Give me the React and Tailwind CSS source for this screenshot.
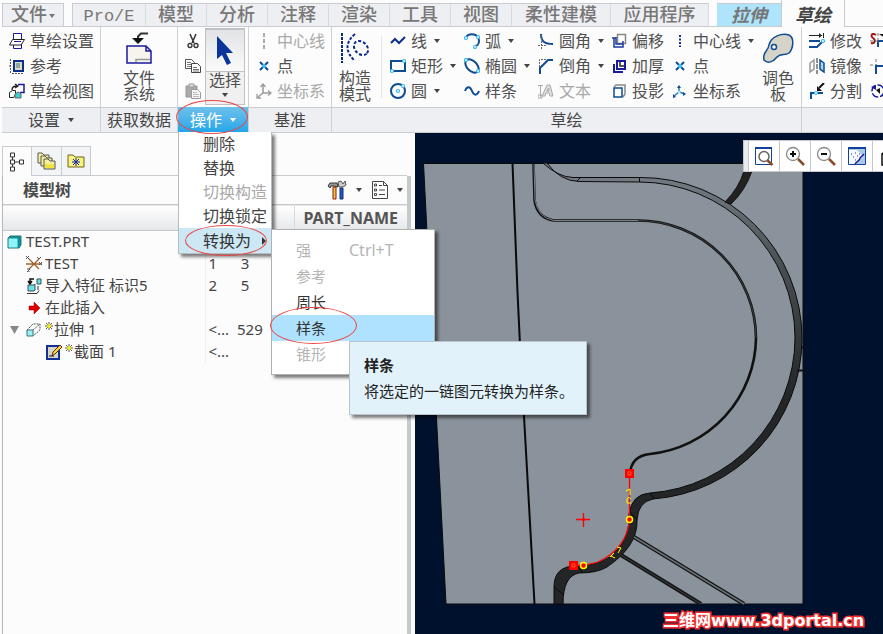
import React, { useState } from 'react';
import clsx from 'clsx';

const NAVY = '#0b2f8a';
const BLUE = '#0f4c92';
const CYAN = '#35b8ee';

const Icon = ({ children, className = 'w-4 h-4', viewBox = '0 0 16 16' }) => (
  <svg viewBox={viewBox} className={clsx('shrink-0', className)} fill="none" aria-hidden="true">
    {children}
  </svg>
);

const Caret = ({ className = 'text-[#444]' }) => (
  <svg viewBox="0 0 6 4" className={clsx('w-[6px] h-1 shrink-0', className)} aria-hidden="true">
    <path d="M0 0h6L3 4z" fill="currentColor" />
  </svg>
);

const Dot = ({ x, y, r = 1.5 }) => (
  <circle cx={x} cy={y} r={r} fill="#fff" stroke={CYAN} strokeWidth="1.2" />
);

const icons = {
  setup: (
    <>
      <path d="M4.500 .5h8v15h-8z" fill="#fff" stroke="#1a1a9c" />
      <path d="M3.500 6.500h12l-3.500 5.500H.5z" fill="#fff" stroke="#222" />
      <path d="M5 8.500h7" stroke="#1a1a9c" />
    </>
  ),
  reference: (
    <>
      <path d="M5 3h9v10H5z" fill="#dcdcc4" stroke={NAVY} strokeWidth="2" />
      <path d="M7 5h4v5H7z" fill="#8fa8a0" />
      <path d="M1.500 1v14M0 8h3M3 15.500h12" stroke="#555" strokeDasharray="2 1" />
    </>
  ),
  sketchView: (
    <>
      <path d="M9 1.500h6v8h-4" stroke="#1a1a9c" strokeWidth="1.500" />
      <path d="M3 7c0-3 2-4 5-4M6 1l3 2-3 2" stroke="#222" strokeWidth="1.300" />
      <path d="M.5 9.500l3-2h3v4l-2 3h-4z" fill="#fff" stroke="#222" />
      <path d="M6 11l3-2 3 2v4H6z" fill="#39d0cf" stroke="#666" />
    </>
  ),
  cut: (
    <>
      <path d="M5 1l4 9M11 1L7 10" stroke="#333" strokeWidth="1.500" />
      <circle cx="5" cy="12.500" r="2" stroke="#333" strokeWidth="1.300" />
      <circle cx="11" cy="12.500" r="2" stroke="#333" strokeWidth="1.300" />
    </>
  ),
  copy: (
    <>
      <path d="M.5 1.500h6l3 3v6h-9z" fill="#fff" stroke="#555" />
      <path d="M2 4.500h4M2 6.500h5M2 8.500h4" stroke="#777" />
      <path d="M6.500 5.500h6l3 3v6h-9z" fill="#fff" stroke="#444" />
      <path d="M8 9.500h4M8 11.500h6M8 13h6" stroke="#777" />
    </>
  ),
  paste: (
    <>
      <path d="M1 3h11v11H1z" fill="#aaa" stroke="#999" />
      <path d="M4 1h5v3H4z" fill="#ddd" stroke="#999" />
      <path d="M6.500 6.500h6l3 3v6h-9z" fill="#f5f5f5" stroke="#999" />
      <path d="M8 9.500h4M8 11.500h6M8 13.500h6" stroke="#bbb" />
    </>
  ),
  centerlineOff: <path d="M8 0v16" stroke="#aaa" strokeWidth="2" strokeDasharray="4 2" />,
  centerline: <path d="M8 2v12" stroke={NAVY} strokeWidth="2" strokeDasharray="2 1.500" />,
  point: (
    <>
      <path d="M4 4l8 8M12 4l-8 8" stroke={BLUE} strokeWidth="2" />
      <circle cx="8" cy="8" r="2" fill="#48c5f5" />
    </>
  ),
  csysOff: (
    <>
      <path d="M7 2v8l7 0M7 10l-5 4" stroke="#999" strokeWidth="1.500" />
      <path d="M4.500 4L7 1l2.500 3M12 7.500L15 10l-3 2.500M1 11v4h4" stroke="#999" strokeWidth="1.300" />
    </>
  ),
  csys: (
    <>
      <path d="M7 3v6l6 2M7 9l-5 4" stroke="#2878b8" strokeWidth="1.500" />
      <path d="M5 5l2-3 2 3zM11 9l3 2-3 2zM1 11v4l3-1z" fill={BLUE} />
      <circle cx="7" cy="9" r="1.500" fill="#9ce4fb" />
    </>
  ),
  line: <path d="M1 10l4-4 4 4 6-6" stroke={NAVY} strokeWidth="2" />,
  rect: (
    <>
      <path d="M1 3h14v10H1z" stroke={BLUE} strokeWidth="2" />
      <Dot x={14} y={3} />
      <Dot x={2} y={13} />
    </>
  ),
  circle: (
    <>
      <circle cx="8" cy="8" r="7" stroke={BLUE} strokeWidth="2" />
      <Dot x={8} y={8} />
      <Dot x={13} y={3} />
    </>
  ),
  arc: (
    <>
      <path d="M2 4C6-1 15 1 15 8c0 3-2 5-4 5" stroke={BLUE} strokeWidth="2" />
      <Dot x={2} y={5} />
      <Dot x={11} y={14} />
      <Dot x={14} y={4} />
    </>
  ),
  ellipse: (
    <>
      <ellipse cx="8" cy="8" rx="8" ry="5" transform="rotate(45 8 8)" stroke={BLUE} strokeWidth="2" />
      <Dot x={2} y={2} />
      <Dot x={14} y={13} />
    </>
  ),
  spline: <path d="M1 8c2-5 5-5 7 0s5 5 7 0" stroke={BLUE} strokeWidth="2" />,
  fillet: (
    <>
      <path d="M3 1c0 8 4 10 12 10" stroke={BLUE} strokeWidth="2" />
      <path d="M3.500 2v14M0 12.500h8" stroke="#666" strokeDasharray="2 1" />
    </>
  ),
  chamfer: (
    <>
      <path d="M15 2h-5L2 10v6" stroke={BLUE} strokeWidth="2" />
      <path d="M1.500 9V1.500H9" stroke="#666" strokeDasharray="2 1" />
    </>
  ),
  text: (
    <>
      <path d="M2.500 2v12M0 2.500h5M0 12h4v3H0z" stroke="#aaa" />
      <path d="M4 13L9 2h3l3 11h-3l-1-3H8l-1 3zM9 8h2l-.5-3z" fill="#ddd" stroke="#aaa" />
    </>
  ),
  offset: (
    <>
      <path d="M6.500 1.500h8v9h-8z" stroke="#888" strokeWidth="1.500" />
      <path d="M3 5v9h9V8M5 5H1M5 4v7h7" stroke="#1a3aa0" strokeWidth="1.500" />
    </>
  ),
  thicken: (
    <>
      <path d="M6 3h8v8H6zM3 6v8h9" stroke="#1a1a9c" strokeWidth="2" />
      <path d="M9 4v4h4" stroke="#222" strokeWidth="1.500" />
    </>
  ),
  project: (
    <>
      <path d="M3 4l2-2h9v9l-2 3" stroke="#888" strokeWidth="1.500" />
      <path d="M3 5h8v9H3z" fill="#fff" stroke={BLUE} strokeWidth="1.500" />
    </>
  ),
  modify: (
    <>
      <path d="M0 2.500h13M14.500 0v5" stroke="#222" />
      <path d="M10 0l3 2.500L10 5z" fill="#222" />
      <path d="M0 8h11" stroke={BLUE} strokeWidth="2" />
      <path d="M0 14h8l5-5" stroke={BLUE} strokeWidth="2" />
      <Dot x={14} y={8} />
    </>
  ),
  mirror: (
    <>
      <path d="M1 5l4-3v9l-4 3z" stroke="#999" strokeWidth="1.500" />
      <path d="M8 0v16" stroke="#222" strokeDasharray="5 1" />
      <path d="M11 2l4 3v9l-4-3z" fill="#a5d8ee" stroke={BLUE} strokeWidth="1.500" />
    </>
  ),
  divide: (
    <>
      <path d="M2 16v-6h12" stroke={BLUE} strokeWidth="2" />
      <path d="M15 0l-5 5" stroke="#111" strokeWidth="2" />
      <path d="M8 3v5h5z" fill="#111" />
      <Dot x={7} y={10} />
    </>
  ),
  trim: (
    <>
      <path d="M6 2C2-1 0 3 3 5s2 6-2 5" stroke="#a01c10" strokeWidth="2" />
      <path d="M8 14V8h8" stroke={BLUE} strokeWidth="2" />
      <path d="M8 0v8M0 8h8" stroke="#777" strokeDasharray="3 2" />
      <path d="M9 1l6 0v4z" fill="#111" />
    </>
  ),
  corner: (
    <>
      <path d="M6 1v14M0 7h7" stroke="#777" strokeDasharray="3 2" />
      <path d="M6 16V8h10" stroke={BLUE} strokeWidth="2" />
    </>
  ),
  rotate: (
    <>
      <circle cx="8" cy="8" r="6" stroke="#1a1a9c" strokeWidth="1.500" strokeDasharray="7 2" />
      <path d="M1 4l5-2v5z" fill="#1a1a9c" />
      <path d="M6 7l4-2v6z" fill="#111" />
    </>
  ),
};

const Tool = ({ icon, label, caret, disabled }) => (
  <button
    type="button"
    disabled={disabled}
    className={clsx('flex items-center h-[25px] gap-[5px] whitespace-nowrap', disabled ? 'text-[#a9a9a9]' : 'text-[#505050]')}
  >
    <Icon>{icons[icon]}</Icon>
    {label && <span>{label}</span>}
    {caret && <Caret className="ml-[2px] text-[#444]" />}
  </button>
);

const ToolColumn = ({ tools, className }) => (
  <div className={clsx('flex flex-col shrink-0 items-start', className)}>
    {tools.map((tool) => (
      <Tool key={tool.icon} {...tool} />
    ))}
  </div>
);

// Large button, the label wraps after two characters
const BigTool = ({ label, className, children }) => (
  <button type="button" className={clsx('flex flex-col items-center shrink-0 pt-1 leading-4 text-[#505050]', className)}>
    {children}
    <span className="w-8 mt-[6px] text-center">{label}</span>
  </button>
);

const Group = ({ label, caret, className, children, footer }) => (
  <section className={clsx('flex flex-col shrink-0 border-r border-[#cdd1d5]', className)}>
    <div className="flex items-start h-20 pt-px">{children}</div>
    {footer || (
      <div className="flex items-center justify-center gap-2 h-[26px] border-y border-[#c8ccd0] bg-[#eeeff2] text-[#444]">
        {label}
        {caret && <Caret />}
      </div>
    )}
  </section>
);

const Ring = ({ className }) => (
  <span className={clsx('absolute z-30 rounded-[50%] border border-[#ee4444] pointer-events-none', className)} />
);

const tabs = [
  { label: 'Pro/E', width: 'w-[73px] text-[17px]' },
  { label: '模型', width: 'w-[61px]' },
  { label: '分析', width: 'w-[61px]' },
  { label: '注释', width: 'w-[61px]' },
  { label: '渲染', width: 'w-[61px]' },
  { label: '工具', width: 'w-[61px]' },
  { label: '视图', width: 'w-[61px]' },
  { label: '柔性建模', width: 'w-[99px]' },
  { label: '应用程序', width: 'w-[98px]' },
];

const TabBar = ({ active, onSelect }) => (
  <nav className="flex items-end h-[27px] pl-[2px] font-['Liberation_Mono','Noto_Sans_CJK_SC',monospace] text-lg leading-none font-medium text-[#777]">
    <button type="button" className="flex items-center justify-center gap-[2px] w-[62px] h-6 pt-[2px] shrink-0 border border-[#c8ccd0] bg-[#eeeff2]">
      文件
      <Caret className="text-[#777]" />
    </button>
    <span className="w-2 h-px shrink-0 bg-[#c8ccd0]" />
    <div className="flex shrink-0 border-l border-[#c8ccd0]">
      {tabs.map((tab) => (
        <button
          key={tab.label}
          type="button"
          onClick={() => onSelect(tab.label)}
          className={clsx('h-6 pt-[2px] shrink-0 border-y border-r border-y-[#c8ccd0] border-r-[#d8dbde] bg-[#eeeff2]', tab.width)}
        >
          {tab.label}
        </button>
      ))}
    </div>
    <span className="w-2 h-px shrink-0 bg-[#c8ccd0]" />
    <button
      type="button"
      onClick={() => onSelect('拉伸')}
      className="w-16 h-6 pt-1 shrink-0 italic font-bold border-y border-[#c8ccd0] bg-[#aee4fc]"
    >
      拉伸
    </button>
    <button
      type="button"
      onClick={() => onSelect('草绘')}
      className={clsx('w-16 h-[27px] pt-[6px] shrink-0 italic font-bold border-x border-[#c8ccd0] bg-[#fcfcfc]', active === '草绘' && 'text-[#444]')}
    >
      草绘
    </button>
    <span className="flex-1 h-px bg-[#c8ccd0]" />
  </nav>
);

const Tooltip = () => (
  <div role="tooltip" className="absolute z-20 left-[77px] top-[26px] w-[238px] h-[74px] px-[14px] pt-3 border border-[#b9c4cb] bg-[#e1f2fb] text-[15px] leading-[22px] text-[#222] whitespace-nowrap shadow-[3px_3px_3px_rgba(0,0,0,0.5)]">
    <div className="font-bold">样条</div>
    <div className="pt-1">将选定的一链图元转换为样条。</div>
  </div>
);

const convertItems = [
  { label: '强', shortcut: 'Ctrl+T', disabled: true },
  { label: '参考', disabled: true },
  { label: '周长' },
  { label: '样条', active: true },
  { label: '锥形', disabled: true },
];

const ConvertMenu = () => (
  <ul role="menu" className="absolute z-10 left-[92px] top-px w-[164px] py-[7px] border border-[#b0b0b0] bg-white text-[15px] shadow-[3px_3px_3px_rgba(0,0,0,0.5)]">
    {convertItems.map((item) => (
      <li key={item.label} className={clsx('relative h-[26px] flex items-center', item.active && 'bg-[#afe2fe]')}>
        <button
          type="button"
          role="menuitem"
          disabled={item.disabled}
          className={clsx('flex items-center w-full pl-6 text-left', item.disabled ? 'text-[#b5b5b5]' : 'text-[#333]')}
        >
          <span className="w-[53px]">{item.label}</span>
          {item.shortcut && <span className="text-base">{item.shortcut}</span>}
        </button>
        {item.active && <Ring className="-left-[2px] -top-2 w-[87px] h-[37px]" />}
        {item.active && <Tooltip />}
      </li>
    ))}
  </ul>
);

const operations = [
  { label: '删除' },
  { label: '替换' },
  { label: '切换构造', disabled: true },
  { label: '切换锁定' },
];

const OperationsMenu = () => (
  <ul role="menu" className="absolute z-20 left-0 top-[25px] w-[94px] border border-t-0 border-[#b8bcc0] bg-white text-base shadow-[3px_3px_3px_rgba(0,0,0,0.5)]">
    {operations.map((item) => (
      <li key={item.label} className="h-6">
        <button
          type="button"
          role="menuitem"
          disabled={item.disabled}
          className={clsx('w-full h-6 pl-6 leading-6 text-left whitespace-nowrap', item.disabled ? 'text-[#a9a9a9]' : 'text-[#444]')}
        >
          {item.label}
        </button>
      </li>
    ))}
    <li className="relative h-[25px] bg-[#cde8f5]">
      <button type="button" role="menuitem" className="flex items-center justify-between w-full h-[25px] pl-6 pr-[5px] text-[#333]">
        转换为
        <svg viewBox="0 0 4 8" className="w-1 h-2" aria-hidden="true">
          <path d="M0 0l4 4-4 4z" fill="#333" />
        </svg>
      </button>
      <Ring className="left-[6px] -top-[3px] w-[82px] h-[31px]" />
      <ConvertMenu />
    </li>
  </ul>
);

const Ribbon = () => (
  <div className="flex pl-[2px] text-base leading-none">
    <Group label="设置" caret className="w-[99px]">
      <ToolColumn
        className="pl-[7px]"
        tools={[
          { icon: 'setup', label: '草绘设置' },
          { icon: 'reference', label: '参考' },
          { icon: 'sketchView', label: '草绘视图' },
        ]}
      />
    </Group>

    <Group label="获取数据" className="w-[77px]">
      <BigTool label="文件系统" className="w-full">
        <Icon viewBox="0 0 26 32" className="w-[26px] h-8">
          <path d="M22 1.500h-7l-3 3v3" stroke="#333" strokeWidth="2" />
          <path d="M6 6h12l-6 6z" fill="#111" />
          <path d="M1 14h19l5 5v12H1z" fill="#f7f4ee" stroke="#1a1a9c" strokeWidth="1.500" />
          <path d="M20 14v5h5" stroke="#1a1a9c" strokeWidth="1.500" />
          <path d="M10 30v-2.500h14" stroke="#999" strokeWidth="1.500" />
        </Icon>
      </BigTool>
    </Group>

    <Group
      className="w-[71px]"
      footer={
        <div className="relative h-[26px]">
          <button
            type="button"
            aria-haspopup="menu"
            aria-expanded="true"
            className="flex items-center justify-center gap-2 w-full h-[26px] bg-linear-to-b from-[#6cc0ea] to-[#16a6ea] text-white"
          >
            操作
            <Caret className="text-white" />
          </button>
          <Ring className="-left-[2px] -top-[7px] w-[72px] h-[34px]" />
          <OperationsMenu />
        </div>
      }
    >
      <ToolColumn className="w-[27px] pl-[7px]" tools={[{ icon: 'cut' }, { icon: 'copy' }, { icon: 'paste' }]} />
      <button type="button" className="flex flex-col items-center w-10 h-[77px] border border-t-2 border-[#bfc1c4] bg-[#f0f0f1] text-[#505050]">
        <span className="flex items-center justify-center w-full h-[42px] shrink-0 border-b border-[#bfc1c4] bg-linear-to-b from-[#e2e3e6] to-[#fafafa]">
          <Icon viewBox="0 0 16 30" className="w-4 h-[30px]">
            <path d="M0 0v23l5-4 5 10 4-2-5-10h7z" fill="#0a339c" />
          </Icon>
        </span>
        <span>选择</span>
        <Caret className="mt-[5px] text-[#444]" />
      </button>
    </Group>

    <Group label="基准" className="w-[83px]">
      <ToolColumn
        className="pl-[7px]"
        tools={[
          { icon: 'centerlineOff', label: '中心线', disabled: true },
          { icon: 'point', label: '点' },
          { icon: 'csysOff', label: '坐标系', disabled: true },
        ]}
      />
    </Group>

    <Group label="草绘" className="w-[470px]">
      <BigTool label="构造模式" className="w-[46px]">
        <Icon viewBox="0 0 30 32" className="w-[30px] h-8">
          <path d="M2 1v30" stroke="#0a2a8a" strokeWidth="2" strokeDasharray="3 1" />
          <path d="M15 2Q0 15 15 29" stroke="#0a2a8a" strokeWidth="2" strokeDasharray="3 1.500" />
          <ellipse cx="21" cy="16" rx="8" ry="6" transform="rotate(45 21 16)" stroke="#0a2a8a" strokeWidth="2" strokeDasharray="3 2" />
        </Icon>
      </BigTool>
      <span className="w-px h-[62px] mt-2 mr-2 shrink-0 ml-[3px] bg-[#e4e6e8]" />
      <ToolColumn
        className="w-[74px]"
        tools={[
          { icon: 'line', label: '线', caret: true },
          { icon: 'rect', label: '矩形', caret: true },
          { icon: 'circle', label: '圆', caret: true },
        ]}
      />
      <ToolColumn
        className="w-[74px]"
        tools={[
          { icon: 'arc', label: '弧', caret: true },
          { icon: 'ellipse', label: '椭圆', caret: true },
          { icon: 'spline', label: '样条' },
        ]}
      />
      <ToolColumn
        className="w-[73px]"
        tools={[
          { icon: 'fillet', label: '圆角', caret: true },
          { icon: 'chamfer', label: '倒角', caret: true },
          { icon: 'text', label: '文本', disabled: true },
        ]}
      />
      <ToolColumn
        className="w-[61px]"
        tools={[
          { icon: 'offset', label: '偏移' },
          { icon: 'thicken', label: '加厚' },
          { icon: 'project', label: '投影' },
        ]}
      />
      <ToolColumn
        className="w-[83px]"
        tools={[
          { icon: 'centerline', label: '中心线', caret: true },
          { icon: 'point', label: '点' },
          { icon: 'csys', label: '坐标系' },
        ]}
      />
      <BigTool label="调色板" className="w-[46px]">
        <Icon viewBox="0 0 32 32" className="w-8 h-8">
          <path d="M2 28C0 20 6 20 7 13 9 4 20 1 27 3c6 3 4 14 0 18-4 3-8 0-12 4-4 5-9 7-13 3z" fill="#d6d4c8" stroke={BLUE} strokeWidth="1.500" />
          <circle cx="12" cy="15" r="2.500" fill="#fff" stroke={BLUE} strokeWidth="1.500" />
        </Icon>
      </BigTool>
    </Group>

    <section className="flex flex-col flex-1 min-w-0 overflow-hidden">
      <div className="flex h-20 pt-px pl-[7px]">
        <ToolColumn
          className="w-[61px]"
          tools={[
            { icon: 'modify', label: '修改' },
            { icon: 'mirror', label: '镜像' },
            { icon: 'divide', label: '分割' },
          ]}
        />
        <ToolColumn tools={[{ icon: 'trim' }, { icon: 'corner' }, { icon: 'rotate' }]} />
      </div>
      <div className="h-[26px] border-y border-[#c8ccd0] bg-[#eeeff2]" />
    </section>
  </div>
);

const Star = () => (
  <Icon viewBox="0 0 8 8" className="w-2 h-2 mx-px -mt-2">
    <path d="M4 0v8M0 4h8M1 1l6 6M7 1L1 7" stroke="#555" strokeWidth="1" />
    <circle cx="4" cy="4" r="2" fill="#f6ee10" />
  </Icon>
);

const treeIcons = {
  part: (
    <>
      <path d="M2 4l2-2h11v9l-2 3H2z" fill="#0f8f98" stroke="#277" />
      <path d="M2.500 4.500h9v9h-9z" fill="#8ff4f6" />
    </>
  ),
  csys: (
    <>
      <path d="M0 8h16M3 3l10 10M13 3L3 13" stroke="#a5622f" strokeWidth="1.300" />
      <path d="M0 0l3 3M3 0L0 3M13 6l3 3M16 6l-3 3M11 1l2 2 2-2M1 13h3l-3 3h3" stroke="#555" />
    </>
  ),
  imported: (
    <>
      <path d="M1 15.500h10l2-3" stroke="#333" />
      <path d="M2 7h6l1-1v6l-1 1H2zM11 1h4v5h-4z" fill="#6fe0e6" stroke="#355" />
      <path d="M8 1H4v4M2 3l2 3 2-3" stroke="#111" strokeWidth="1.500" />
      <path d="M12 8v4" stroke="#333" />
    </>
  ),
  insert: <path d="M3 6h5V2l6 6-6 6v-4H3z" fill="#e00000" stroke="#900" strokeWidth=".5" />,
  extrude: (
    <>
      <path d="M1 8h6v6H1z" fill="#9ff0f4" stroke="#377" />
      <path d="M1 8l6-6h7v6l-7 6M7 8l7-6" stroke="#555" strokeDasharray="2 1" />
    </>
  ),
  section: (
    <>
      <path d="M1 2h12v13H1z" fill="#d8d5c4" stroke="#12309a" strokeWidth="2" />
      <path d="M6 12l1-4 7-7 2 2-7 7z" fill="#f5d838" stroke="#5a2a10" />
      <path d="M3 12h5" stroke="#222" />
    </>
  ),
};

const treeRows = [
  { icon: 'part', label: 'TEST.PRT', indent: 'pl-[3px]', gap: 'mr-1' },
  { icon: 'csys', label: 'TEST', indent: 'pl-[23px]', gap: 'mr-[3px]', no: '1', id: '3' },
  { icon: 'imported', label: '导入特征 标识5', indent: 'pl-[23px]', gap: 'mr-[3px]', no: '2', id: '5' },
  { icon: 'insert', label: '在此插入', indent: 'pl-[23px]', gap: 'mr-[3px]' },
  { icon: 'extrude', label: '拉伸 1', indent: 'pl-[7px]', gap: 'mr-[2px]', open: true, star: true, no: '<...', id: '529' },
  { icon: 'section', label: '截面 1', indent: 'pl-[43px]', gap: 'mr-[2px]', star: true, no: '<...' },
];

const ModelTree = () => (
  <table className="w-full table-fixed border-collapse text-[15px] leading-none text-[#444]">
    <thead>
      <tr className="h-[26px] border-y border-[#c5c8cb] bg-linear-to-b from-white to-[#e6e7e9]">
        <th className="w-[202px]" aria-label="模型树" />
        <th className="w-[30px]" />
        <th className="w-[59px]" />
        <th className="border-l border-[#d8dadd] p-0 text-base leading-none font-bold text-[#555] text-center">PART_NAME</th>
      </tr>
    </thead>
    <tbody>
      {treeRows.map((row) => (
        <tr key={row.label} className="h-[22px]">
          <td className="p-0 border-r border-[#efefef]">
            <div className={clsx('flex items-center whitespace-nowrap', row.indent)}>
              {row.open && (
                <Icon viewBox="0 0 9 8" className="w-[9px] h-2 mr-[7px]">
                  <path d="M0 0h9L4.500 8z" fill="#888" />
                </Icon>
              )}
              <Icon className={clsx('w-4 h-4', row.gap)}>{treeIcons[row.icon]}</Icon>
              {row.star && <Star />}
              {row.label}
            </div>
          </td>
          <td className="p-0 pl-[3px]">{row.no}</td>
          <td className="p-0 pl-[2px]">
            <span className="block min-w-4 w-min text-center">{row.id}</span>
          </td>
          <td />
        </tr>
      ))}
    </tbody>
  </table>
);

const TreePanel = () => (
  <aside className="flex flex-col w-[415px] shrink-0 pl-[2px] pr-1 pt-[13px]">
    <div className="flex h-[30px]">
      <button type="button" aria-label="模型树" className="flex items-center justify-center w-[30px] border border-b-0 border-[#c8ccd0]">
        <Icon viewBox="0 0 14 20" className="w-[14px] h-5">
          <path d="M.5 1h4v4h-4zM.5 8h4v4h-4zM.5 15h4v4h-4zM9.500 8h4v4h-4zM2.500 5v3M2.500 12v3M4.500 10h5" stroke="#333" />
        </Icon>
      </button>
      <button type="button" aria-label="文件夹浏览器" className="flex items-center justify-center w-[30px] border-y border-r border-[#c8ccd0] bg-[#f3f4f5]">
        <Icon viewBox="0 0 20 20" className="w-5 h-5">
          {[0, 3, 6].map((n) => (
            <path key={n} d="M1 2h4l2 2h5v8H1z" transform={`translate(${n} ${n})`} fill="#f8f2a0" stroke="#555" />
          ))}
          <path d="M8 13h9v4H8z" fill="#f2e440" />
        </Icon>
      </button>
      <button type="button" aria-label="收藏夹" className="flex items-center justify-center w-[29px] border-y border-r border-[#c8ccd0] bg-[#f3f4f5]">
        <Icon viewBox="0 0 18 18" className="w-[18px] h-[18px]">
          <path d="M1 15V3h5l2 2h9v10z" fill="#f9f27c" stroke="#6a6420" />
          <path d="M9 6v8M5 10h8M6 7l6 6M12 7l-6 6" stroke="#1020b0" />
        </Icon>
      </button>
      <span className="flex-1 mr-1 border-b border-[#c8ccd0]" />
    </div>
    <div className="flex flex-col flex-1 border-l border-r-4 border-l-[#b5b8bb] border-r-[#c5cacd]">
      <div className="flex items-center h-7 pl-5 pr-1 text-base leading-none font-bold text-[#4a4a4a]">
        <h2 className="flex-1">模型树</h2>
        <button type="button" aria-label="设置" className="flex items-center gap-[9px]">
          <Icon viewBox="0 0 20 20" className="w-5 h-5">
            <path d="M1 6l2-3h7l1 4-4-1H4L3 8z" fill="#999" stroke="#333" />
            <path d="M6 7h3v12H6z" fill="#f0c040" stroke="#8a2010" />
            <path d="M13 8h3v11h-3z" fill="#2458c8" stroke="#112a70" />
            <path d="M11 2l1 5h4l3-2-1-4-2 3-2-3z" fill="#ccc" stroke="#555" />
          </Icon>
          <Caret />
        </button>
        <button type="button" aria-label="显示" className="flex items-center gap-[9px] ml-[10px]">
          <Icon viewBox="0 0 16 20" className="w-4 h-5">
            <path d="M.5 1.500h11l4 4v13H.5z" fill="#fff" stroke="#444" />
            <path d="M11.500 1.500v4h4M7 5.500h3M7 10h6M7 14.500h6" stroke="#444" />
            <path d="M2.500 4h2v2h-2zM2.500 9h2v2h-2zM2.500 13.500h2v2h-2z" stroke="#444" />
          </Icon>
          <Caret />
        </button>
      </div>
      <ModelTree />
    </div>
  </aside>
);

const viewTools = [
  {
    name: '重新调整',
    drawing: (
      <>
        <path d="M1.500 1.500h16v17h-16z" fill="#fff" stroke="#12409c" />
        <path d="M1 2h17" stroke="#12409c" strokeWidth="2" />
        <circle cx="10" cy="10.500" r="5" fill="#fff" stroke="#666" strokeWidth="1.500" />
        <path d="M13.500 14.500l5 4.500" stroke="#8b4a2a" strokeWidth="2.500" />
      </>
    ),
  },
  {
    name: '放大',
    drawing: (
      <>
        <circle cx="8" cy="8" r="6.500" fill="#fff" stroke="#888" strokeWidth="1.300" />
        <path d="M8 5v6M5 8h6" stroke="#111" strokeWidth="2" />
        <path d="M13 13l6 6" stroke="#8b4a2a" strokeWidth="2.500" />
      </>
    ),
  },
  {
    name: '缩小',
    drawing: (
      <>
        <circle cx="8" cy="8" r="6.500" fill="#fff" stroke="#888" strokeWidth="1.300" />
        <path d="M5 8h6" stroke="#111" strokeWidth="2" />
        <path d="M13 13l6 6" stroke="#8b4a2a" strokeWidth="2.500" />
      </>
    ),
  },
  {
    name: '重画',
    drawing: (
      <>
        <path d="M1.500 1.500h17v17h-17z" fill="#a9cbe8" stroke="#12409c" />
        <path d="M1 2h18" stroke="#12409c" strokeWidth="2" />
        <path d="M2 4h8l6 6-7 8H2z" fill="#f6faff" />
        <path d="M4 8h1M8 7h1M6 11h1M10 10h1M8 14h1M12 8h1" stroke="#12409c" />
        <path d="M8 18c2-3 5-3 5-6l4-4" stroke="#1a1a9c" strokeWidth="1.500" />
      </>
    ),
  },
  {
    name: '显示样式',
    drawing: <path d="M4 8l4-4h11v11M4 8h11v11H4z" fill="#fff" stroke="#111" strokeWidth="1.500" />,
  },
];

const ViewToolbar = () => (
  <div className="absolute right-0 top-[7px] flex w-[140px] h-8 overflow-hidden border border-r-0 border-[#c5c8cb] bg-[#e9eaec]">
    <span className="w-1 shrink-0" />
    {viewTools.map((tool) => (
      <button
        key={tool.name}
        type="button"
        aria-label={tool.name}
        className="flex items-center justify-center w-[31px] shrink-0 border-l border-[#c5c8cb] bg-white"
      >
        <Icon viewBox="0 0 20 20" className="w-5 h-5">{tool.drawing}</Icon>
      </button>
    ))}
  </div>
);

// Drawing coordinates are window coordinates, the viewport starts at 415,133
const Model = () => (
  <svg viewBox="415 133 468 501" className="block w-full" role="img" aria-label="TEST.PRT">
    <defs>
      <linearGradient id="wall" x1="0" y1="178" x2="0" y2="400" gradientUnits="userSpaceOnUse">
        <stop offset="0" stopColor="#737c82" />
        <stop offset="0.400" stopColor="#484f52" />
        <stop offset="1" stopColor="#232527" />
      </linearGradient>
    </defs>
    <path d="M423.500 163.500H803V604H446z" fill="#8a929b" stroke="#0a0a0a" />
    <path d="M512.500 163L515 228 517.500 292 520 345 530 523 534.500 604" fill="none" stroke="#0a0a0a" strokeWidth="2" />

    <g fill="none">
      <path
        d="M533.500 163L534.500 200Q537 218 554 220.500L638 220.500A118 118 0 0 1 756 338A118 118 0 0 1 650 454Q631 456 630 474"
        stroke="#111"
        strokeWidth="2.600"
      />
      <path d="M534 164L535 200Q538 218 554 220.500H638" stroke="#778087" />
      <path d="M638 220.500A118 118 0 0 1 756 338" stroke="#4a5155" strokeWidth=".7" />
    </g>

    <path
      d="M543 163Q558 177 573 177.500H640A161 161 0 0 1 802 339A161 161 0 0 1 653 499Q638 502 637 520Q638 546 607 567Q597 573 579 573Q563 576 563 604H554V587Q554 566 576 566Q604 566 617 550Q630 537 629 514Q632 494 650 493A156 156 0 0 0 795 338A156 156 0 0 0 639 182L579 181.500Q560 181 547 163z"
      fill="url(#wall)"
      stroke="#0a0a0a"
    />
    <path d="M639.500 177v5M577 181l3-3M650 493l4 6M630 512l7 8M577 566l6 7M554 587l9 7" stroke="#0a0a0a" />
    <path d="M744 171Q739 188 725 202L731 204Q745 191 752 171z" fill="#222" stroke="#111" />
    <path d="M801 347.500h2M797 370.500h6" stroke="#111" strokeWidth="2" />

    <g fill="none">
      <path d="M634 537L744 604" stroke="#111" strokeWidth="4" />
      <path d="M634 537L744 604" stroke="#697176" strokeWidth="1.500" />
      <path d="M621 555L701 604" stroke="#151515" strokeWidth="4" />
      <path d="M621 555L701 604" stroke="#3c4144" strokeWidth="1" />
    </g>

    <path d="M629.500 478V520Q627 548 598 562 590 565 575 565.500" fill="none" stroke="#f00" strokeWidth="1.300" />
    <path d="M625 469h9v9h-9zM569 561h9v9h-9z" fill="#f00" />
    <path d="M628 472h3v3h-3zM572 564h3v3h-3z" fill="none" stroke="#ff5a20" />
    <path d="M583.500 513v14M576 519.500h14" fill="none" stroke="#f00" strokeWidth="1.300" />
    <circle cx="583.500" cy="519.500" r="1.500" fill="#f00" />
    <g stroke="#ff0" strokeWidth="1.500">
      <circle cx="629.500" cy="519.500" r="3" fill="#f00" />
      <circle cx="583.500" cy="565.500" r="3" fill="#f00" />
    </g>
    <path
      d="M626 491l4-2v6M631 499q-4-4-4 2v2h4M617 547l4 1-3 5M610 557l4-4M611 556l4 2"
      fill="none"
      stroke="#ff0"
    />
    <text
      x="663"
      y="626"
      className="font-['DejaVu_Sans','Noto_Sans_CJK_SC',sans-serif] text-base font-bold"
      fill="#fff"
      stroke="#f03030"
      strokeWidth="3"
      paintOrder="stroke"
    >
      三维网www.3dportal.cn
    </text>
  </svg>
);

const App = () => {
  const [activeTab, setActiveTab] = useState('草绘');

  return (
    <div className="flex flex-col min-h-screen overflow-hidden bg-[#fcfcfc] font-['Noto_Sans','Noto_Sans_CJK_SC',sans-serif] text-[#444]">
      <header className="relative z-10">
        <TabBar active={activeTab} onSelect={setActiveTab} />
        <Ribbon />
      </header>
      <div className="flex flex-1">
        <TreePanel />
        <main className="relative flex-1 min-w-0 bg-[#00112e]">
          <Model />
          <ViewToolbar />
        </main>
      </div>
    </div>
  );
};

export default App;
